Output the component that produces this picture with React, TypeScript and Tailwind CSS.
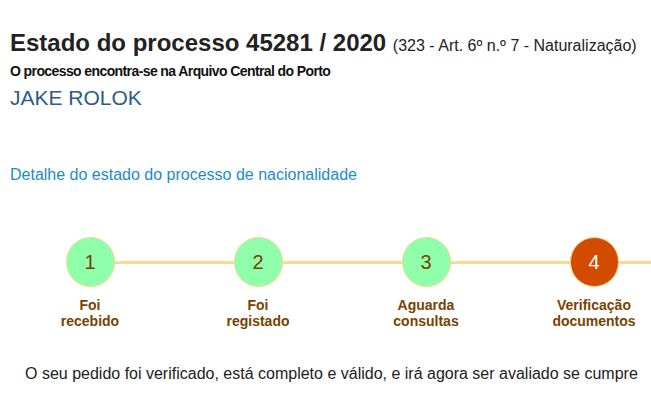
export default function App() {
  const steps = [
    { n: "1", label: ["Foi", "recebido"], done: true },
    { n: "2", label: ["Foi", "registado"], done: true },
    { n: "3", label: ["Aguarda", "consultas"], done: true },
    { n: "4", label: ["Verificação", "documentos"], current: true },
  ];

  return (
    <div className="w-[651px] h-[420px] overflow-hidden bg-white font-['Liberation_Sans',Arial,sans-serif]">
      <div className="px-[10px] pt-[28px]">
        <h1 className="text-[24px] font-bold leading-[30px] text-[#222]">
          Estado do processo 45281 / 2020{" "}
          <span className="text-[16px] font-normal">(323 - Art. 6º n.º 7 - Naturalização)</span>
        </h1>
        <p className="text-[14px] font-bold leading-[20px] tracking-[-0.6px] text-[#111]">
          O processo encontra-se na Arquivo Central do Porto
        </p>
        <p className="mt-[4px] text-[21px] leading-[26px] text-[#2d5c88]">JAKE ROLOK</p>
        <a className="mt-[54px] block text-[16px] leading-[20px] text-[#1a8ccc]">
          Detalhe do estado do processo de nacionalidade
        </a>
      </div>

      {/* stepper */}
      <div className="mt-[52px] flex w-max pl-[6px]">
        {steps.map((s, i) => (
          <div key={s.n} className="flex w-[168px] flex-col items-center">
            <div className="flex w-full items-center">
              <div className={i === 0 ? "h-[3px] flex-1" : "h-[3px] flex-1 bg-[#fbd98f]"} />
              <div
                className={
                  s.current
                    ? "flex h-[50px] w-[49px] items-center justify-center rounded-full border border-[#f5d98c] bg-[#d24b00] text-[20px] text-white"
                    : "flex h-[50px] w-[49px] items-center justify-center rounded-full border border-[#f5d98c] bg-[#8fffab] text-[20px] text-[#7a4100]"
                }
              >
                {s.n}
              </div>
              <div className="h-[3px] flex-1 bg-[#fbd98f]" />
            </div>
            <div className="mt-[10px] text-center text-[14px] font-bold leading-[16px] text-[#7a4100]">
              {s.label[0]}
              <br />
              {s.label[1]}
            </div>
          </div>
        ))}
      </div>

      <p className="mt-[35px] pl-[25px] text-[16px] leading-[20px] text-[#222]">
        O seu pedido foi verificado, está completo e válido, e irá agora ser avaliado se cumpre
      </p>
    </div>
  );
}
